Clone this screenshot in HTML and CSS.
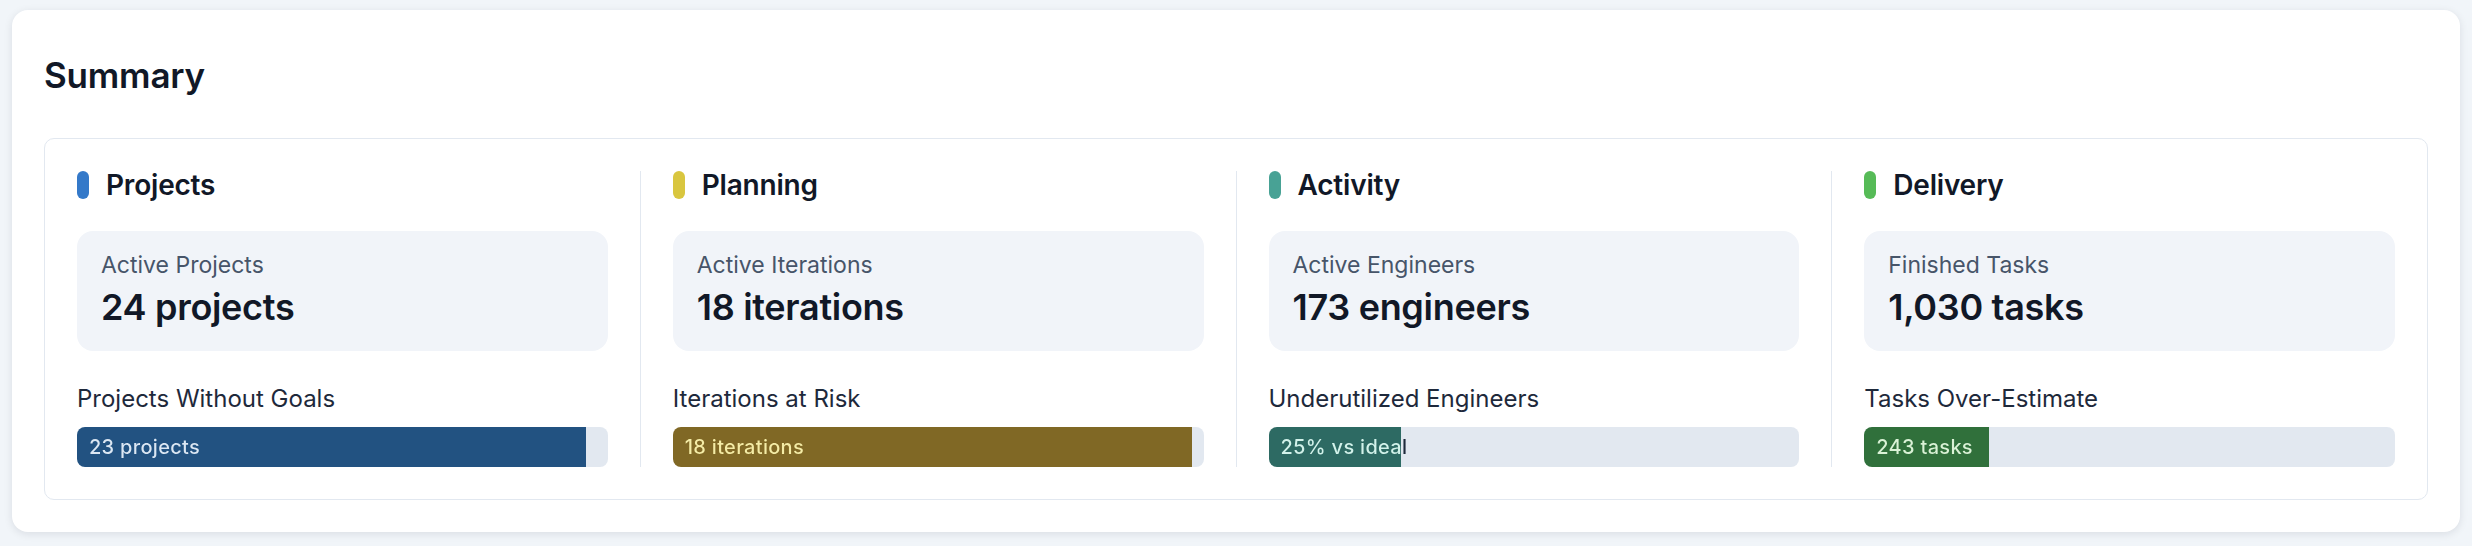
FILE: index.html
```html
<!DOCTYPE html>
<html lang="en">
<head>
    <meta charset="UTF-8">
    <meta name="viewport" content="width=device-width, initial-scale=1.0">
    <title>Summary</title>
    <link rel="stylesheet" href="styles.css">
</head>
<body>
    <div class="card">
        <h2 class="card-title">Summary</h2>

        <div class="summary">
            <!-- Projects -->
            <div class="col blue">
                <div class="col-head"><span class="pill"></span>Projects</div>
                <div class="stat">
                    <div class="stat-label">Active Projects</div>
                    <div class="stat-value">24 projects</div>
                </div>
                <div class="metric-label">Projects Without Goals</div>
                <div class="bar" style="--pct: 95.83%"><span class="bar-text">23 projects</span></div>
            </div>

            <!-- Planning -->
            <div class="col yellow">
                <div class="col-head"><span class="pill"></span>Planning</div>
                <div class="stat">
                    <div class="stat-label">Active Iterations</div>
                    <div class="stat-value">18 iterations</div>
                </div>
                <div class="metric-label">Iterations at Risk</div>
                <div class="bar" style="--pct: 97.8%"><span class="bar-text">18 iterations</span></div>
            </div>

            <!-- Activity -->
            <div class="col teal">
                <div class="col-head"><span class="pill"></span>Activity</div>
                <div class="stat">
                    <div class="stat-label">Active Engineers</div>
                    <div class="stat-value">173 engineers</div>
                </div>
                <div class="metric-label">Underutilized Engineers</div>
                <div class="bar" style="--pct: 25%"><span class="bar-text">25% vs ideal</span></div>
            </div>

            <!-- Delivery -->
            <div class="col green">
                <div class="col-head"><span class="pill"></span>Delivery</div>
                <div class="stat">
                    <div class="stat-label">Finished Tasks</div>
                    <div class="stat-value">1,030 tasks</div>
                </div>
                <div class="metric-label">Tasks Over-Estimate</div>
                <div class="bar" style="--pct: 23.6%"><span class="bar-text">243 tasks</span></div>
            </div>
        </div>
    </div>
</body>
</html>
```

FILE: styles.css
```css
* {
    margin: 0;
    padding: 0;
    box-sizing: border-box;
}

body {
    font-family: Inter, "Noto Sans", sans-serif;
    background-color: #f1f5f9;
    color: #111827;
    padding: 10px 12px 13px;
}

.card {
    background: #fff;
    border-radius: 16px;
    padding: 32px;
    box-shadow: 0 2px 8px rgba(15, 23, 42, 0.1);
}

.card-title {
    font-size: 35px;
    line-height: 40px;
    font-weight: 600;
    letter-spacing: -0.2px;
    margin: 13px 0 43px;
}

/* four columns split by thin lines */
.summary {
    display: flex;
    border: 1px solid #e2e8f0;
    border-radius: 10px;
    padding: 32px;
}

.col {
    flex: 1 1 0;
    min-width: 0;
}

.col:not(:last-child) {
    padding-right: 32px;
}

.col + .col {
    padding-left: 32px;
    border-left: 1px solid #e2e8f0;
}

/* colour set per column */
.blue   { --accent: #3479c9; --fill: #225281; --on-fill: #dce7f3; }
.yellow { --accent: #d9c63f; --fill: #806825; --on-fill: #f4eca6; }
.teal   { --accent: #48a295; --fill: #2d6a63; --on-fill: #d2f2ea; }
.green  { --accent: #56bb57; --fill: #30703b; --on-fill: #daf2d6; }

.col-head {
    display: flex;
    align-items: center;
    gap: 17px;
    height: 28px;
    font-size: 28px;
    font-weight: 600;
    letter-spacing: -0.2px;
}

.pill {
    width: 12px;
    height: 28px;
    border-radius: 6px;
    background: var(--accent);
}

.stat {
    margin-top: 32px;
    background: #f1f4f9;
    border-radius: 16px;
    padding: 20px 24px 22px;
}

.stat-label {
    font-size: 23px;
    line-height: 28px;
    color: #475569;
}

.stat-value {
    margin-top: 6px;
    font-size: 36px;
    line-height: 44px;
    font-weight: 600;
    letter-spacing: -0.3px;
}

.metric-label {
    margin-top: 32px;
    font-size: 24px;
    line-height: 32px;
    color: #1e293b;
}

/* progress bar: the fill and the label colour both switch at --pct */
.bar {
    margin-top: 12px;
    height: 40px;
    border-radius: 8px;
    background: linear-gradient(to right, var(--fill) var(--pct), #e2e8f0 var(--pct));
}

.bar-text {
    display: block;
    padding: 0 12px;
    font-size: 20px;
    line-height: 40px;
    font-weight: 500;
    letter-spacing: 0.3px;
    white-space: nowrap;
    color: transparent;
    background: linear-gradient(to right, var(--on-fill) var(--pct), #1e293b var(--pct));
    -webkit-background-clip: text;
    background-clip: text;
}
```
